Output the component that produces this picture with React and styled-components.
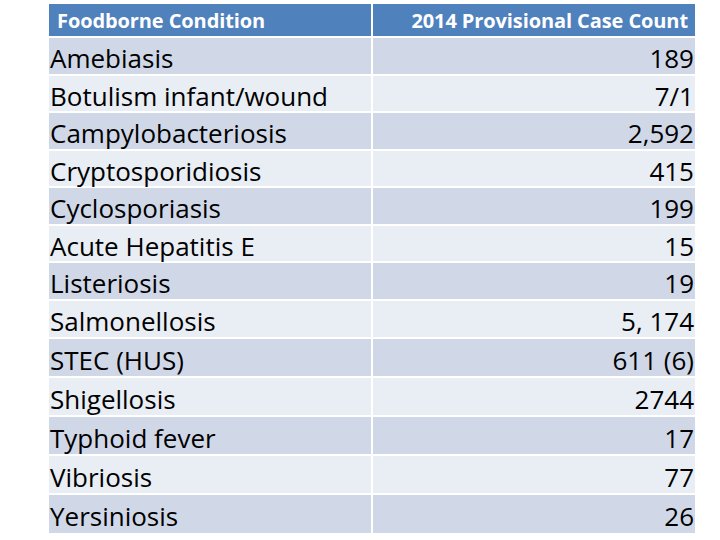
import styled, { createGlobalStyle } from 'styled-components';

const GlobalStyle = createGlobalStyle`
  body {
    margin: 0;
    background: #ffffff;
    font-family: "Open Sans", Lato, sans-serif;
    font-variant-ligatures: none;
  }
`;

const Page = styled.div`
  width: 720px;
  height: 540px;
  padding: 4px 0 0 49px;
  box-sizing: border-box;
`;

const Table = styled.div`
  width: 646px;
  display: grid;
  grid-template-columns: 322px 322px;
  column-gap: 2px;
  row-gap: 2px;
`;

const HeadCell = styled.div`
  height: 32px;
  background: #4f81bd;
  color: #ffffff;
  font-weight: 700;
  font-size: 20px;
  letter-spacing: -0.1px;
  display: flex;
  align-items: center;
  justify-content: ${(p) => (p.$right ? 'flex-end' : 'flex-start')};
  padding: 1px 7px 0 8px;
  box-sizing: border-box;
`;

const Cell = styled.div`
  background: ${(p) => (p.$odd ? '#d0d8e8' : '#e9edf4')};
  color: #000000;
  font-size: 26px;
  display: flex;
  align-items: center;
  justify-content: ${(p) => (p.$right ? 'flex-end' : 'flex-start')};
  padding: 4px 1px 0 1px;
  box-sizing: border-box;
  line-height: 1;
`;

const rows = [
  ['Amebiasis', '189', 36],
  ['Botulism infant/wound', '7/1', 35],
  ['Campylobacteriosis', '2,592', 36],
  ['Cryptosporidiosis', '415', 35],
  ['Cyclosporiasis', '199', 36],
  ['Acute Hepatitis E', '15', 35],
  ['Listeriosis', '19', 36],
  ['Salmonellosis', '5, 174', 36],
  ['STEC (HUS)', '611 (6)', 37],
  ['Shigellosis', '2744', 37],
  ['Typhoid fever', '17', 37],
  ['Vibriosis', '77', 37],
  ['Yersiniosis', '26', 38],
];

export default function App() {
  return (
    <Page>
      <GlobalStyle />
      <Table>
        <HeadCell>Foodborne Condition</HeadCell>
        <HeadCell $right>2014 Provisional Case Count</HeadCell>
        {rows.map(([name, count, h], i) => [
          <Cell key={name} $odd={i % 2 === 0} style={{ height: h }}>
            {name}
          </Cell>,
          <Cell key={name + '-n'} $odd={i % 2 === 0} $right style={{ height: h }}>
            {count}
          </Cell>,
        ])}
      </Table>
    </Page>
  );
}
